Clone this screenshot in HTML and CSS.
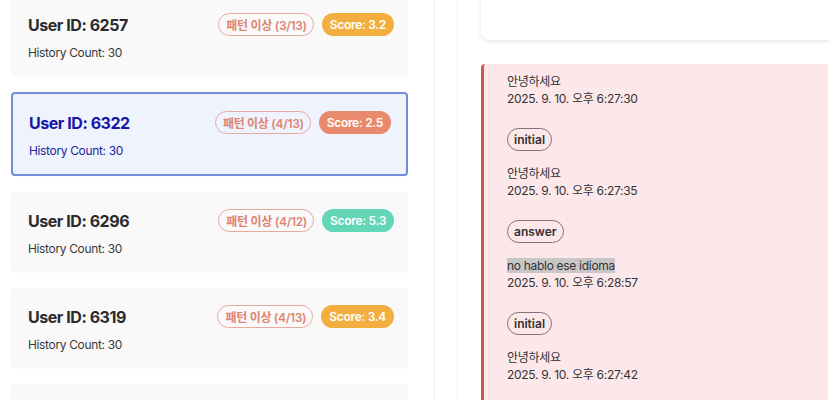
FILE: index.html
```html
<!DOCTYPE html>
<html lang="ko">
<head>
<meta charset="utf-8">
<link rel="stylesheet" href="styles.css">
</head>
<body>
<div class="app">
  <aside class="list">
    <div class="cards">
      <div class="card">
        <div class="card-head">
          <div class="uid">User ID: 6257</div>
          <div class="badges"><span class="pattern">패턴 이상 (3/13)</span><span class="score mid">Score: 3.2</span></div>
        </div>
        <div class="count">History Count: 30</div>
      </div>
      <div class="card selected">
        <div class="card-head">
          <div class="uid">User ID: 6322</div>
          <div class="badges"><span class="pattern">패턴 이상 (4/13)</span><span class="score low">Score: 2.5</span></div>
        </div>
        <div class="count">History Count: 30</div>
      </div>
      <div class="card">
        <div class="card-head">
          <div class="uid">User ID: 6296</div>
          <div class="badges"><span class="pattern">패턴 이상 (4/12)</span><span class="score high">Score: 5.3</span></div>
        </div>
        <div class="count">History Count: 30</div>
      </div>
      <div class="card">
        <div class="card-head">
          <div class="uid">User ID: 6319</div>
          <div class="badges"><span class="pattern">패턴 이상 (4/13)</span><span class="score mid">Score: 3.4</span></div>
        </div>
        <div class="count">History Count: 30</div>
      </div>
      <div class="card card-empty"></div>
    </div>
  </aside>
  <div class="gutter"></div>
  <main class="detail">
    <div class="summary"></div>
    <div class="history">
      <div class="msg">
        <div class="text">안녕하세요</div>
        <div class="time">2025. 9. 10. 오후 6:27:30</div>
      </div>
      <span class="tag">initial</span>
      <div class="msg">
        <div class="text">안녕하세요</div>
        <div class="time">2025. 9. 10. 오후 6:27:35</div>
      </div>
      <span class="tag">answer</span>
      <div class="msg">
        <div class="text"><span class="hl">no hablo ese idioma</span></div>
        <div class="time">2025. 9. 10. 오후 6:28:57</div>
      </div>
      <span class="tag">initial</span>
      <div class="msg">
        <div class="text">안녕하세요</div>
        <div class="time">2025. 9. 10. 오후 6:27:42</div>
      </div>
    </div>
  </main>
</div>
</body>
</html>
```

FILE: styles.css
```css
html, body {
  margin: 0;
  padding: 0;
  background: #ffffff;
  overflow: hidden;
  height: 400px;
}
body {
  font-family: "Inter", "Noto Sans CJK KR", sans-serif;
  color: #333;
}
.app {
  display: flex;
  width: 828px;
  height: 400px;
  overflow: hidden;
}
.list {
  width: 435px;
  flex: none;
  border-right: 1px solid #ededed;
  box-sizing: border-box;
  padding: 0 26px 0 11px;
  overflow: hidden;
}
.cards {
  margin-top: -4px;
  display: flex;
  flex-direction: column;
  gap: 16px;
}
.card {
  background: #f9f9f9;
  border: 1px solid #f7f7f7;
  border-radius: 4px;
  padding: 15px 13px 14px 16px;
  box-shadow: 0 1px 2px rgba(0,0,0,0.02);
}
.card-empty {
  height: 60px;
}
.card.selected {
  background: #eef3fd;
  border: 2px solid #6f8ddb;
  padding: 16px 15px 15px 16px;
}
.card-head {
  display: flex;
  align-items: center;
  justify-content: space-between;
  height: 26px;
}
.uid {
  font-size: 16px;
  font-weight: 700;
  color: #2b2b2b;
  letter-spacing: -0.45px;
}
.selected .uid {
  color: #1616a8;
}
.count {
  margin-top: 6px;
  font-size: 12px;
  line-height: 17px;
  color: #3a3a3a;
  letter-spacing: -0.35px;
}
.selected .count {
  color: #2424a0;
}
.badges {
  display: flex;
  gap: 8px;
  margin-top: -1px;
}
.pattern, .score {
  display: inline-flex;
  align-items: center;
  height: 23px;
  box-sizing: border-box;
  border-radius: 12px;
  font-size: 12px;
  font-weight: 600;
  white-space: nowrap;
  letter-spacing: -0.3px;
}
.pattern {
  padding: 0 6px 0 7px;
  border: 1px solid #e8aa9c;
  color: #e08472;
  background: transparent;
}
.score {
  color: #fff;
  padding: 0 8px;
}
.score.mid { background: #f2ae3e; }
.score.low { background: #ea8a6c; }
.score.high { background: #62d6b6; }

.gutter {
  width: 22px;
  flex: none;
  border-right: 1px solid #f2f2f2;
}
.detail {
  flex: none;
  width: 500px;
  padding-left: 23px;
  display: flex;
  flex-direction: column;
  gap: 24px;
}
.summary {
  flex: none;
  height: 80px;
  margin-top: -40px;
  background: #fff;
  border-radius: 8px;
  box-shadow: 0 1px 4px rgba(0,0,0,0.12);
}
.history {
  flex: none;
  background: #fce8ea;
  border-left: 3px solid #c65a45;
  border-radius: 4px 0 0 0;
  padding: 9px 0 0 23px;
  height: 400px;
  display: flex;
  flex-direction: column;
  align-items: flex-start;
}
.msg {
  font-size: 12px;
  line-height: 17px;
  color: #333;
  letter-spacing: -0.3px;
}
.hl {
  background: #c9c6c7;
}
.tag {
  margin: 21px 0 14px;
  display: inline-flex;
  align-items: center;
  height: 23px;
  box-sizing: border-box;
  padding: 0 6px;
  border: 1px solid #857378;
  border-radius: 12px;
  font-size: 12px;
  font-weight: 600;
  color: #333;
}
```
